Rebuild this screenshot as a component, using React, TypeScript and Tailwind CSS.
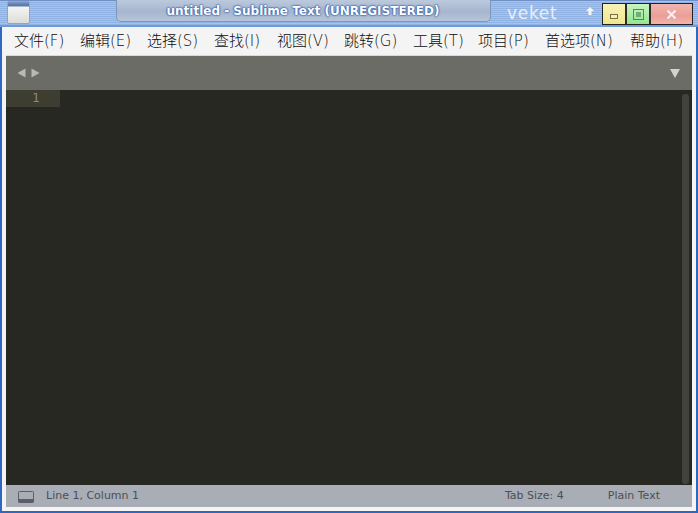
export default function App() {
  const menus = [
    ["文件(F)", "w-[66px]"],
    ["编辑(E)", "w-[67px]"],
    ["选择(S)", "w-[67px]"],
    ["查找(I)", "w-[63px]"],
    ["视图(V)", "w-[67px]"],
    ["跳转(G)", "w-[69px]"],
    ["工具(T)", "w-[65px]"],
    ["项目(P)", "w-[67px]"],
    ["首选项(N)", "w-[85px]"],
    ["帮助(H)", "w-[62px]"],
  ] as const;
  return (
    <div className="w-[698px] h-[513px] overflow-hidden bg-[#f5f4f4] flex flex-col relative font-['DejaVu_Sans','Noto_Sans_CJK_SC',sans-serif]">
      {/* title bar */}
      <div className="h-[27px] shrink-0 flex items-start relative bg-[repeating-linear-gradient(180deg,#a6c3ea_0px,#a6c3ea_1px,#8fb2e2_1px,#8fb2e2_2px)] border-t border-[#6f8fc4] border-b-2 border-b-[#6f9ad8]">
        <div className="ml-[7px] mt-0 w-[23px] h-[23px] rounded-[2px] border border-[#9aa3ae] bg-[linear-gradient(180deg,#7f9ac8_0px,#5b79ad_3px,#5b79ad_4px,#f4f4f2_5px,#dcdcd8_100%)]" />
        <div className="ml-[86px] w-[375px] h-[22px] -mt-px border border-t-0 border-[#7f97bf] rounded-bl-[5px] rounded-br-[5px] bg-[linear-gradient(180deg,#bcc9dc_0%,#a6b6ce_55%,#b7c5da_100%)] flex items-center justify-center">
          <span className="text-[12px] font-bold text-white leading-[22px] -ml-[1px] mt-[1px] [text-shadow:0_0_2px_#2a56a8,0_0_2px_#2a56a8,0_0_1px_#2a56a8]">
            untitled - Sublime Text (UNREGISTERED)
          </span>
        </div>
        <span className="ml-[16px] mt-px w-[70px] text-[17px] leading-[22px] tracking-[0.7px] text-[#e6eefb]">veket</span>
        <svg width="10" height="10" viewBox="0 0 10 10" className="mt-[5px] ml-[8px]">
          <path d="M5 1 L9 5 H6.5 V9 H3.5 V5 H1 Z" fill="#f4f6fa" />
        </svg>
        <div className="absolute left-[602px] top-[2px] w-[91px] h-[22px] bg-[#2c2c2c] border border-[#222] flex gap-[2px]">
          <div className="w-[22px] bg-[linear-gradient(180deg,#f6f2b4,#f2e68c)] flex items-center justify-center">
            <span className="w-[8px] h-[5px] mt-[5px] border border-[#77714a] bg-[#f4efb8]" />
          </div>
          <div className="w-[22px] bg-[linear-gradient(180deg,#c8f3c0,#95e68f)] flex items-center justify-center">
            <span className="w-[11px] h-[11px] border border-[#4f8a5a] flex items-center justify-center">
              <span className="w-[5px] h-[5px] bg-[#6fae7a]" />
            </span>
          </div>
          <div className="flex-1 bg-[linear-gradient(180deg,#f0b5ae,#eb9e96_60%,#f4b5ae)] flex items-center justify-center">
            <svg width="11" height="11" viewBox="0 0 11 11">
              <path d="M1.5 1.5 L9.5 9.5 M9.5 1.5 L1.5 9.5" stroke="#fbeeee" strokeWidth="2.2" />
            </svg>
          </div>
        </div>
      </div>

      {/* window body */}
      <div className="flex-1 min-h-0 flex flex-col border-x-2 border-x-[#2f68c0] border-b-2 border-b-[#2f68c0]">
        <div className="h-[28px] shrink-0 flex items-center pl-[9px] pt-[1px] text-[15px] font-light text-[#0c0c0c]">
          {menus.map(([m, w]) => (
            <span key={m} className={`shrink-0 whitespace-nowrap pl-[3px] ${w}`}>
              {m}
            </span>
          ))}
        </div>
        <div className="flex-1 min-h-0 flex flex-col mx-[4px] mb-[4px]">
          <div className="h-[35px] shrink-0 bg-[#6b6c66] border-t border-[#d9d9d6] flex items-center justify-between pl-[11px] pr-[12px]">
            <div className="flex gap-[5px]">
              <svg width="9" height="10" viewBox="0 0 9 10"><path d="M8.5 0.5 V9.5 L0.5 5 Z" fill="#b9b9b5" /></svg>
              <svg width="9" height="10" viewBox="0 0 9 10"><path d="M0.5 0.5 V9.5 L8.5 5 Z" fill="#b9b9b5" /></svg>
            </div>
            <svg width="10" height="9" viewBox="0 0 10 9"><path d="M0 0 H10 L5 9 Z" fill="#d2d2cf" /></svg>
          </div>
          <div className="flex-1 min-h-0 bg-[#272822] flex items-start relative">
            <div className="w-[54px] h-[17px] bg-[#3e3d32] text-[#8a8a7c] text-[12px] leading-[17px] text-right pr-[20px]">1</div>
            <div className="absolute right-[3px] top-[4px] bottom-[1px] w-[7px] rounded-[3px] bg-[#42433e]" />
          </div>
          <div className="h-[22px] shrink-0 bg-[#a8adb6] flex items-center pt-px text-[11px] text-[#4c4f57] pl-[12px]">
            <svg width="16" height="12" viewBox="0 0 16 12" className="shrink-0">
              <rect x="0.5" y="0.5" width="15" height="11" rx="1" fill="#a8adb6" stroke="#5b5e66" />
              <rect x="0.5" y="8" width="15" height="3.5" fill="#5b5e66" />
            </svg>
            <span className="ml-[12px]">Line 1, Column 1</span>
            <span className="ml-auto">Tab Size: 4</span>
            <span className="ml-[44px] mr-[32px]">Plain Text</span>
          </div>
        </div>
      </div>
    </div>
  );
}
